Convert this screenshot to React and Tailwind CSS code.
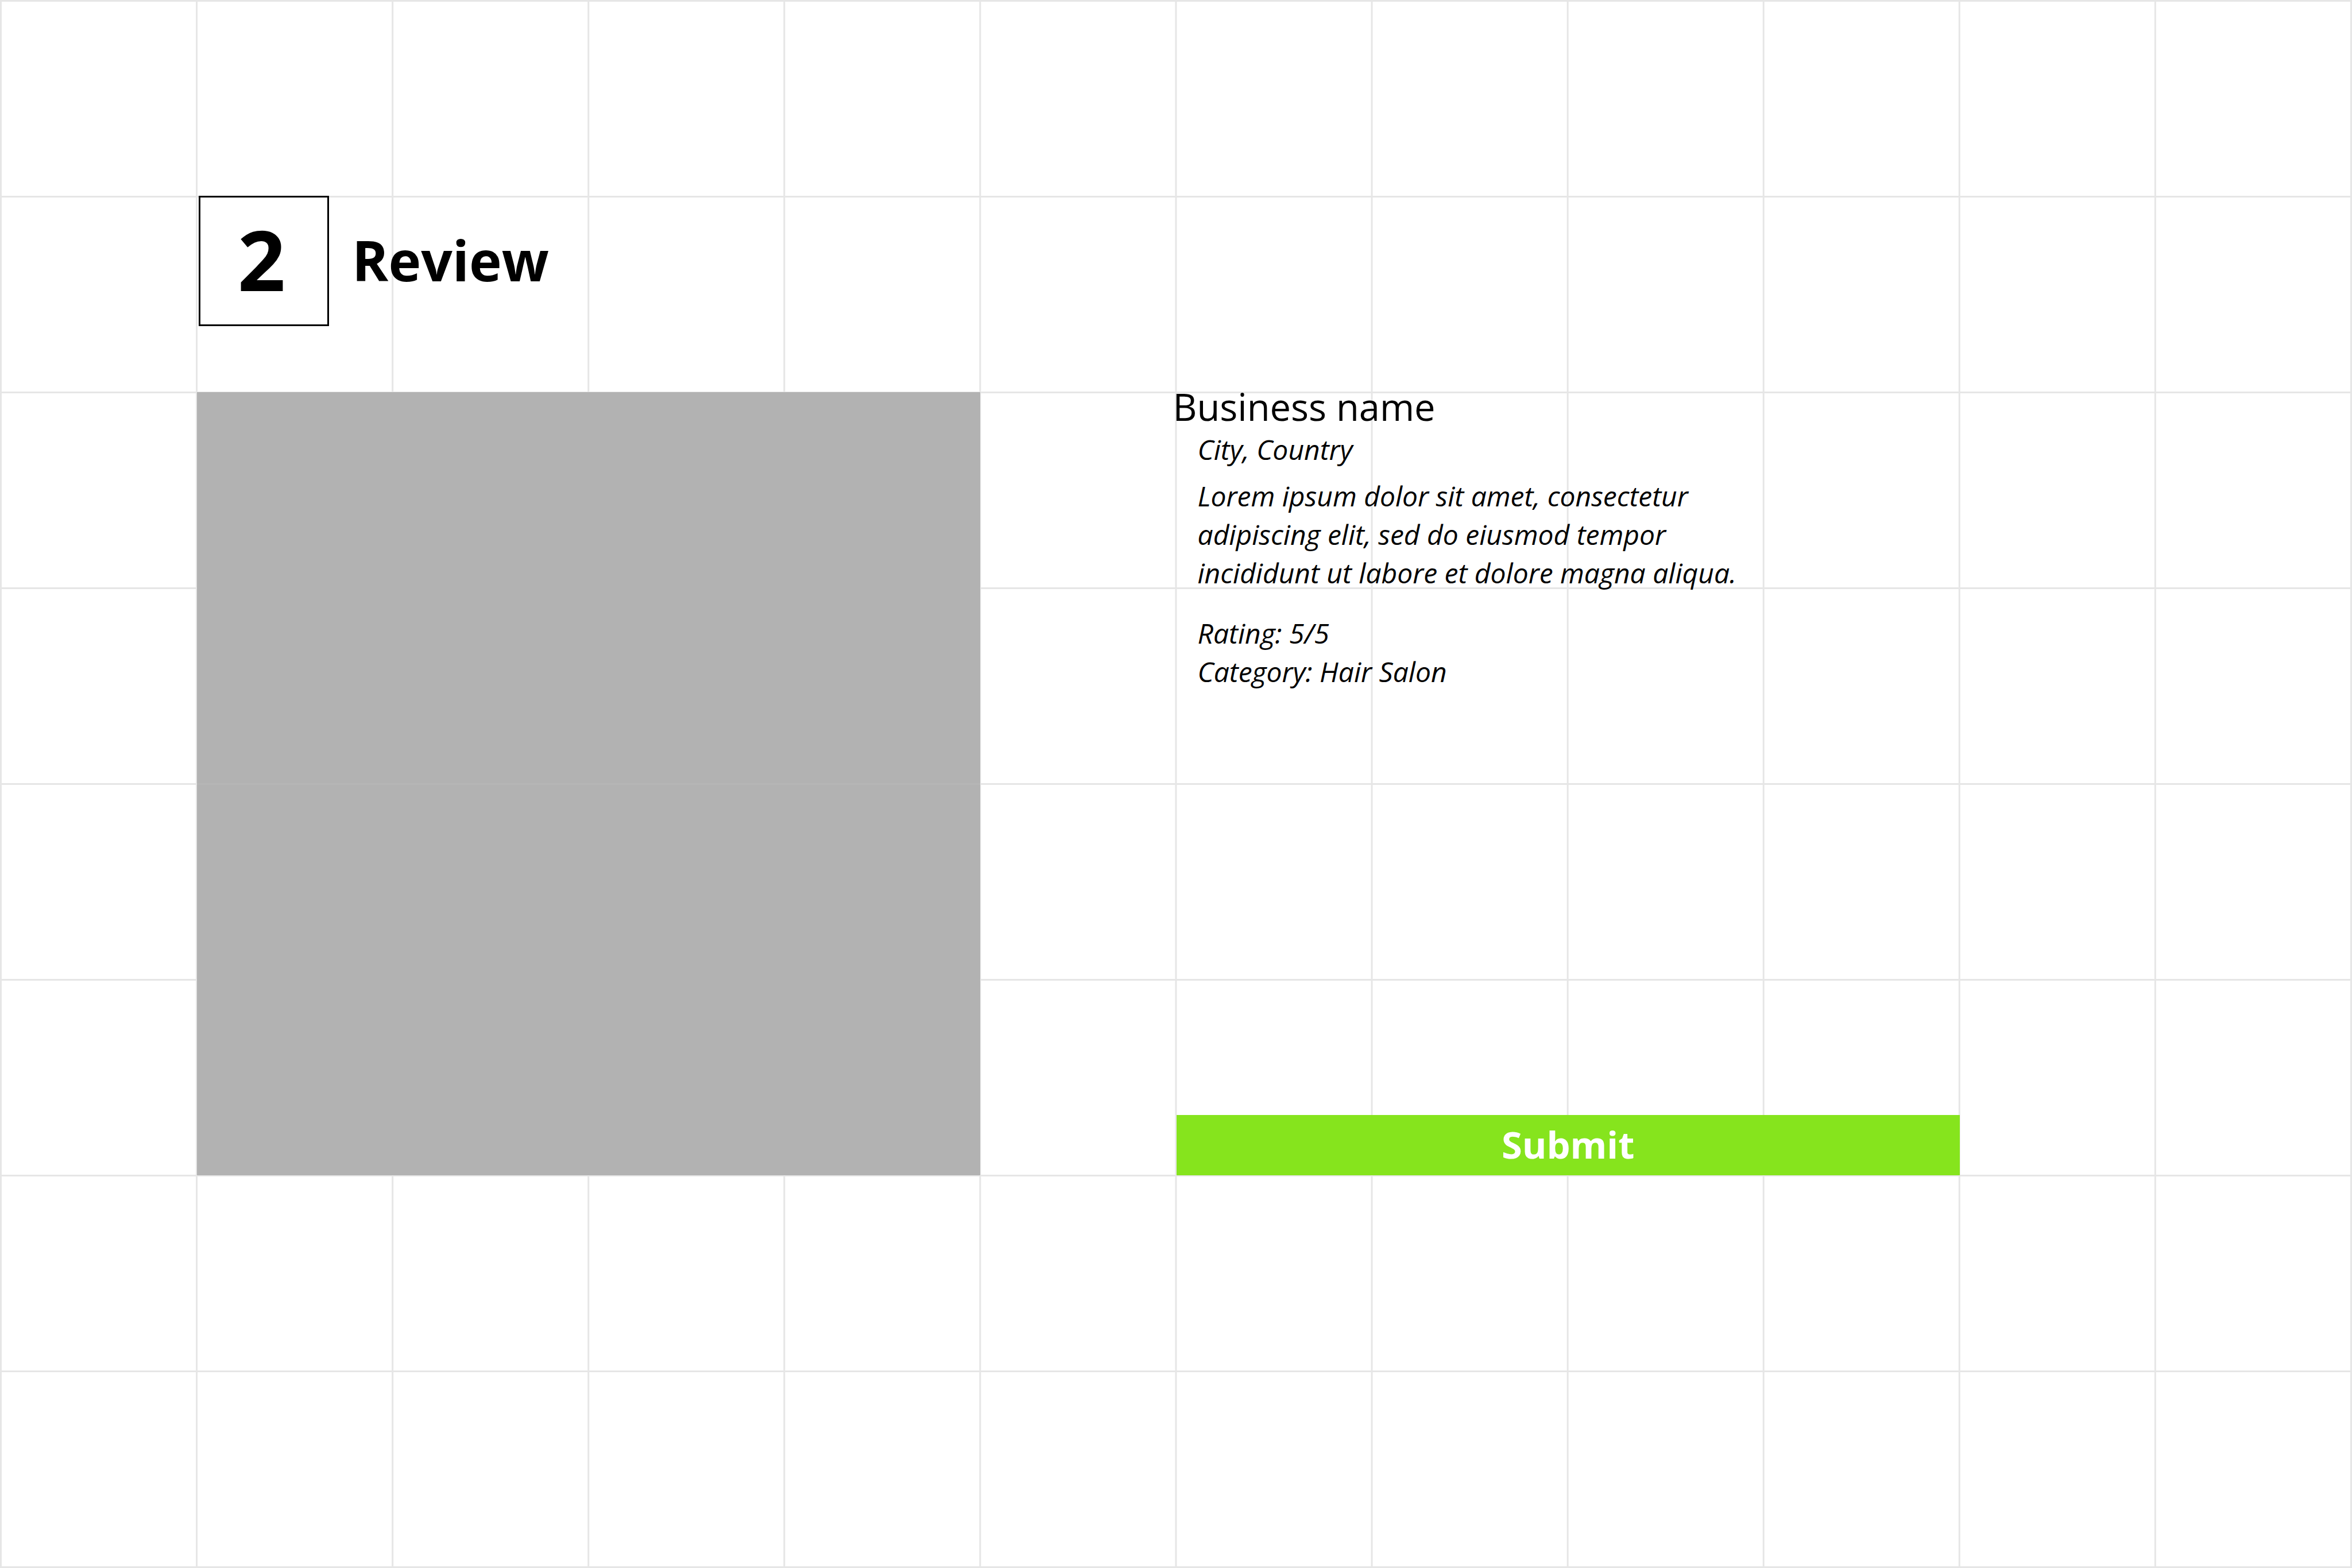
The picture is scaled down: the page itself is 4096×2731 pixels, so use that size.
export default function App() {
  return (
    <main className="min-h-screen bg-white bg-[linear-gradient(to_right,#e6e6e6_3px,transparent_3px),linear-gradient(to_bottom,#e6e6e6_3px,transparent_3px)] bg-[length:calc((100%-3px)/12)_calc((100%-3px)/8)] pt-[341px] pr-px pl-0.5 font-['Open_Sans',sans-serif] text-black">
      <div className="grid grid-cols-12">
        <header className="col-span-10 col-start-2 flex items-center pl-[3px]">
          <span className="flex size-[227px] items-center justify-center border-3 border-black bg-white pr-2 pb-2 text-[146px] leading-none font-bold">
            2
          </span>
          <h1 className="pb-1 pl-[40px] text-[96px] leading-none font-bold">Review</h1>
        </header>

        <div
          role="img"
          aria-label="Business photo"
          className="col-span-4 col-start-2 mt-[115px] grid aspect-square grid-rows-2 gap-px bg-[#bcbcbc]"
        >
          <div className="bg-[#b2b2b2]" />
          <div className="bg-[#b2b2b2]" />
        </div>

        <section className="col-span-4 col-start-7 mt-[115px] flex flex-col">
          <h2 className="-ml-1.5 text-[65px] leading-[50px]">Business name</h2>
          <div className="pl-[37px] text-[48px] leading-[67px] italic">
            <p className="mt-4">City, Country</p>
            <p className="mt-3.5 max-w-[960px]">
              Lorem ipsum dolor sit amet, consectetur adipiscing elit, sed do eiusmod tempor incididunt ut labore et dolore magna aliqua.
            </p>
            <p className="mt-[38px]">Rating: 5/5</p>
            <p>Category: Hair Salon</p>
          </div>
          <button type="button" className="mt-auto h-[105px] w-full bg-[#86e41d] pb-0.5 text-[65px] leading-none font-bold text-white">
            Submit
          </button>
        </section>
      </div>
    </main>
  );
}
